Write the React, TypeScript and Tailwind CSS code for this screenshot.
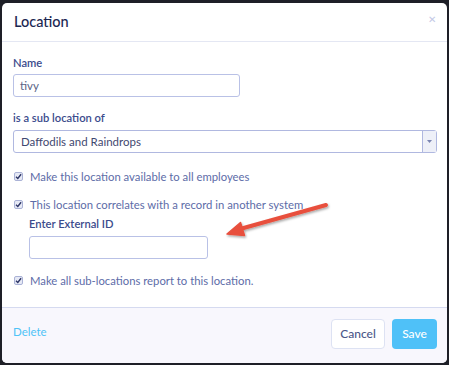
import React from "react";

function Check() {
  return (
    <span className="flex h-[9px] w-[9px] shrink-0 items-center justify-center rounded-[2px] border border-[#aab2d6] bg-[#e6e9f5]">
      <svg width="7" height="7" viewBox="0 0 7 7">
        <path d="M1 3.7 L2.8 5.4 L6.1 1.3" fill="none" stroke="#2d3566" strokeWidth="1.4" />
      </svg>
    </span>
  );
}

export default function App() {
  return (
    <div className="h-[365px] w-[449px] overflow-hidden bg-[#1e1f27] pl-[2px] pt-[3px]" style={{ fontFamily: "Lato, 'Open Sans', sans-serif" }}>
      <div className="relative flex h-[360px] w-[445px] flex-col overflow-hidden rounded-[5px] bg-white">
        <div className="flex h-[39px] shrink-0 items-center justify-between border-b border-[#e4e7f3] pl-[12px] pr-[11px]">
          <span className="text-[14.5px] font-medium text-[#1c2752]">Location</span>
          <span className="mb-[5px] text-[10px] text-[#c3c9e6]">✕</span>
        </div>
        <div className="flex flex-1 flex-col px-[11px] pt-[13px]">
          <div className="text-[11.2px] font-semibold leading-[15px] text-[#3b4b8c]">Name</div>
          <div className="mt-[4px] flex h-[23px] w-[227px] items-center rounded-[3px] border border-[#b9c1e6] px-[6px] text-[11.5px] text-[#5a6385]">tivy</div>
          <div className="mt-[13px] text-[11.2px] font-semibold leading-[15px] text-[#3b4b8c]">is a sub location of</div>
          <div className="mt-[5px] flex h-[23px] w-[424px] items-center rounded-[3px] border border-[#b0b8e0]">
            <span className="flex-1 px-[7px] text-[11.5px] text-[#3f4870]">Daffodils and Raindrops</span>
            <span className="flex h-full w-[14px] items-center justify-center border-l border-[#b0b8e0] bg-[#eef0f8]">
              <svg width="5" height="4" viewBox="0 0 5 4"><path d="M0 0 L5 0 L2.5 3 Z" fill="#7a84b0" /></svg>
            </span>
          </div>
          <div className="mt-[16px] flex h-[15px] items-center gap-[7px] pl-[1px]">
            <Check />
            <span className="text-[11.3px] leading-[15px] text-[#5d6ca8]">Make this location available to all employees</span>
          </div>
          <div className="mt-[13px] flex h-[15px] items-center gap-[7px] pl-[1px]">
            <Check />
            <span className="text-[11.3px] leading-[15px] text-[#5d6ca8]">This location correlates with a record in another system</span>
          </div>
          <div className="ml-[16px] mt-[4px] text-[11.2px] font-semibold leading-[15px] text-[#3b4b8c]">Enter External ID</div>
          <div className="ml-[16px] mt-[5px] h-[23px] w-[179px] rounded-[3px] border border-[#b9c1e6]" />
          <div className="mt-[14px] flex h-[15px] items-center gap-[7px] pl-[1px]">
            <Check />
            <span className="text-[11.3px] leading-[15px] text-[#5d6ca8]">Make all sub-locations report to this location.</span>
          </div>
        </div>
        <div className="flex h-[56px] shrink-0 items-start justify-between border-t border-[#d5daf0] bg-[#f8f7fd] pl-[11px] pr-[10px] pt-[11px]">
          <span className="mt-[4px] text-[11.5px] text-[#4fc3f7]">Delete</span>
          <div className="flex gap-[7px]">
            <button className="h-[30px] w-[54px] rounded-[4px] border border-[#dde2f3] bg-white text-[12px] font-medium text-[#4a5688]">Cancel</button>
            <button className="h-[30px] w-[45px] rounded-[4px] bg-[#4fc1f8] text-[12px] font-medium text-white">Save</button>
          </div>
        </div>
        <svg className="absolute left-[222px] top-[193px]" width="110" height="50" viewBox="0 0 110 50">
          <defs>
            <filter id="sh" x="-20%" y="-50%" width="140%" height="200%">
              <feDropShadow dx="1" dy="1.5" stdDeviation="1.2" floodColor="#000" floodOpacity="0.35" />
            </filter>
          </defs>
          <g filter="url(#sh)">
            <path d="M102 9 L16 33" stroke="#e8503e" strokeWidth="4" strokeLinecap="round" />
            <path d="M3 38 L16.5 26.5 L20.5 39.5 Z" fill="#e8503e" stroke="#e8503e" strokeWidth="1.5" strokeLinejoin="round" />
          </g>
        </svg>
      </div>
    </div>
  );
}
